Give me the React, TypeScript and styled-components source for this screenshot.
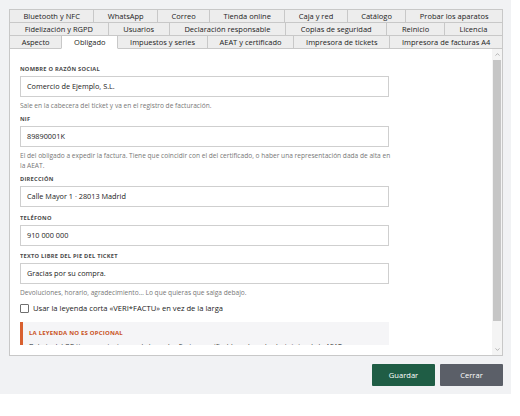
import React from "react";
import styled, { createGlobalStyle } from "styled-components";

const GlobalStyle = createGlobalStyle`
  html, body {
    margin: 0;
    padding: 0;
    background: #ffffff;
  }
  body {
    font-family: "Open Sans", "Noto Sans", sans-serif;
    color: #222;
  }
  * { box-sizing: border-box; }
`;

const Window = styled.div`
  width: 511px;
  height: 394px;
  background: #f1f2f4;
  padding: 9px 8px 8px 9px;
  display: flex;
  flex-direction: column;
`;

const TabStrip = styled.div`
  display: flex;
  flex-direction: column;
`;

const TabRow = styled.div`
  display: flex;
  margin-bottom: -1px;
`;

const Tab = styled.div<{ $active?: boolean }>`
  flex: 1 1 auto;
  height: 14px;
  padding: 0 6px;
  margin-left: -1px;
  &:first-child { margin-left: 0; }
  border: 1px solid #c8c8c8;
  background: ${(p) => (p.$active ? "#ffffff" : "#ededed")};
  ${(p) =>
    p.$active &&
    `
    border-bottom-color: #ffffff;
    position: relative;
    z-index: 2;
  `}
  font-size: 7.5px;
  line-height: 12px;
  text-align: center;
  white-space: nowrap;
  color: #222;
`;

const Panel = styled.div`
  flex: 1;
  min-height: 0;
  display: flex;
  background: #ffffff;
  border: 1px solid #c8c8c8;
  position: relative;
  z-index: 1;
`;

const Body = styled.div`
  flex: 1;
  display: flex;
  flex-direction: column;
  padding: 16px 10px 10px 10px;
  min-height: 0;
`;

const Viewport = styled.div`
  flex: 1;
  overflow: hidden;
`;

/* help text may run a little wider than the controls */
const Form = styled.div`
  width: 376px;
  display: flex;
  flex-direction: column;
`;

const Field = styled.div`
  display: flex;
  flex-direction: column;
  margin-bottom: 6.5px;
`;

const Label = styled.div`
  font-size: 5.7px;
  font-weight: 700;
  letter-spacing: 0.25px;
  line-height: 8px;
  text-transform: uppercase;
  color: #4a4a4a;
  margin-bottom: 3px;
`;

const Input = styled.div`
  width: 369px;
  height: 21px;
  border: 1px solid #cfcfcf;
  background: #fff;
  padding: 0 6px;
  font-size: 7.3px;
  line-height: 19px;
  color: #222;
`;

const Help = styled.div`
  margin: 4px 0 -2.5px;
  font-size: 6.6px;
  line-height: 10px;
  color: #777;
`;

const CheckRow = styled.label`
  display: flex;
  align-items: center;
  gap: 4px;
  height: 12px;
  font-size: 7.6px;
  color: #222;
`;

const Box = styled.span`
  width: 9px;
  height: 9px;
  border: 1px solid #6f6f6f;
  border-radius: 1px;
  background: #fff;
  flex: none;
`;

const Notice = styled.div`
  width: 369px;
  margin-top: 8px;
  background: #f5f5f7;
  border-left: 3px solid #d8602f;
  padding: 7px 8px 6px 6px;
`;

const NoticeTitle = styled.div`
  font-size: 6px;
  font-weight: 700;
  letter-spacing: 0.2px;
  line-height: 9px;
  color: #c9521d;
  text-transform: uppercase;
`;

const NoticeText = styled.div`
  margin-top: 2.5px;
  font-size: 6.8px;
  line-height: 11px;
  color: #333;
`;

const Scrollbar = styled.div`
  width: 10px;
  display: flex;
  flex-direction: column;
  background: #f4f4f4;
`;

const ScrollArrow = styled.div`
  height: 11px;
  display: flex;
  align-items: center;
  justify-content: center;
  flex: none;
`;

const Track = styled.div`
  flex: 1;
  display: flex;
  flex-direction: column;
  padding: 0 1px;
`;

const Thumb = styled.div`
  background: #c6c6c6;
  flex: none;
`;

const Footer = styled.div`
  display: flex;
  justify-content: flex-end;
  gap: 5px;
  margin-top: 8px;
`;

const Button = styled.button<{ $tone: "primary" | "neutral" }>`
  width: 63px;
  height: 22px;
  border: none;
  border-radius: 1px;
  padding: 0;
  font-family: inherit;
  font-size: 7.6px;
  color: #ffffff;
  background: ${(p) => (p.$tone === "primary" ? "#1f5d45" : "#5b5f68")};
`;

const rows: string[][] = [
  ["Bluetooth y NFC", "WhatsApp", "Correo", "Tienda online", "Caja y red", "Catálogo", "Probar los aparatos"],
  ["Fidelización y RGPD", "Usuarios", "Declaración responsable", "Copias de seguridad", "Reinicio", "Licencia"],
  ["Aspecto", "Obligado", "Impuestos y series", "AEAT y certificado", "Impresora de tickets", "Impresora de facturas A4"],
];

const Chevron = ({ up }: { up?: boolean }) => (
  <svg width="5" height="3" viewBox="0 0 5 3">
    <path
      d={up ? "M0.5 2.6 L2.5 0.6 L4.5 2.6" : "M0.5 0.4 L2.5 2.4 L4.5 0.4"}
      fill="none"
      stroke="#a3a3a3"
      strokeWidth="0.8"
    />
  </svg>
);

export default function App() {
  const active = "Obligado";
  const thumbRatio = 0.92;
  return (
    <>
      <GlobalStyle />
      <Window>
        <TabStrip>
          {rows.map((row, i) => (
            <TabRow key={i}>
              {row.map((t) => (
                <Tab key={t} $active={t === active}>
                  {t}
                </Tab>
              ))}
            </TabRow>
          ))}
        </TabStrip>
        <Panel>
          <Body>
            <Viewport>
              <Form>
                <Field>
                  <Label>Nombre o razón social</Label>
                  <Input>Comercio de Ejemplo, S.L.</Input>
                  <Help>Sale en la cabecera del ticket y va en el registro de facturación.</Help>
                </Field>
                <Field>
                  <Label>NIF</Label>
                  <Input>89890001K</Input>
                  <Help>
                    El del obligado a expedir la factura. Tiene que coincidir con el del certificado, o haber una
                    representación dada de alta en la AEAT.
                  </Help>
                </Field>
                <Field>
                  <Label>Dirección</Label>
                  <Input>Calle Mayor 1 · 28013 Madrid</Input>
                </Field>
                <Field>
                  <Label>Teléfono</Label>
                  <Input>910 000 000</Input>
                </Field>
                <Field>
                  <Label>Texto libre del pie del ticket</Label>
                  <Input>Gracias por su compra.</Input>
                  <Help>Devoluciones, horario, agradecimiento… Lo que quieras que salga debajo.</Help>
                </Field>
                <CheckRow>
                  <Box />
                  Usar la leyenda corta «VERI*FACTU» en vez de la larga
                </CheckRow>
                <Notice>
                  <NoticeTitle>La leyenda no es opcional</NoticeTitle>
                  <NoticeText>
                    Debajo del QR tiene que ir siempre la leyenda «Factura verificable en la sede electrónica de la
                    AEAT» o su forma corta.
                  </NoticeText>
                </Notice>
              </Form>
            </Viewport>
          </Body>
          <Scrollbar>
            <ScrollArrow>
              <Chevron up />
            </ScrollArrow>
            <Track>
              <Thumb style={{ flexBasis: `${thumbRatio * 100}%` }} />
            </Track>
            <ScrollArrow>
              <Chevron />
            </ScrollArrow>
          </Scrollbar>
        </Panel>
        <Footer>
          <Button $tone="primary">Guardar</Button>
          <Button $tone="neutral">Cerrar</Button>
        </Footer>
      </Window>
    </>
  );
}
